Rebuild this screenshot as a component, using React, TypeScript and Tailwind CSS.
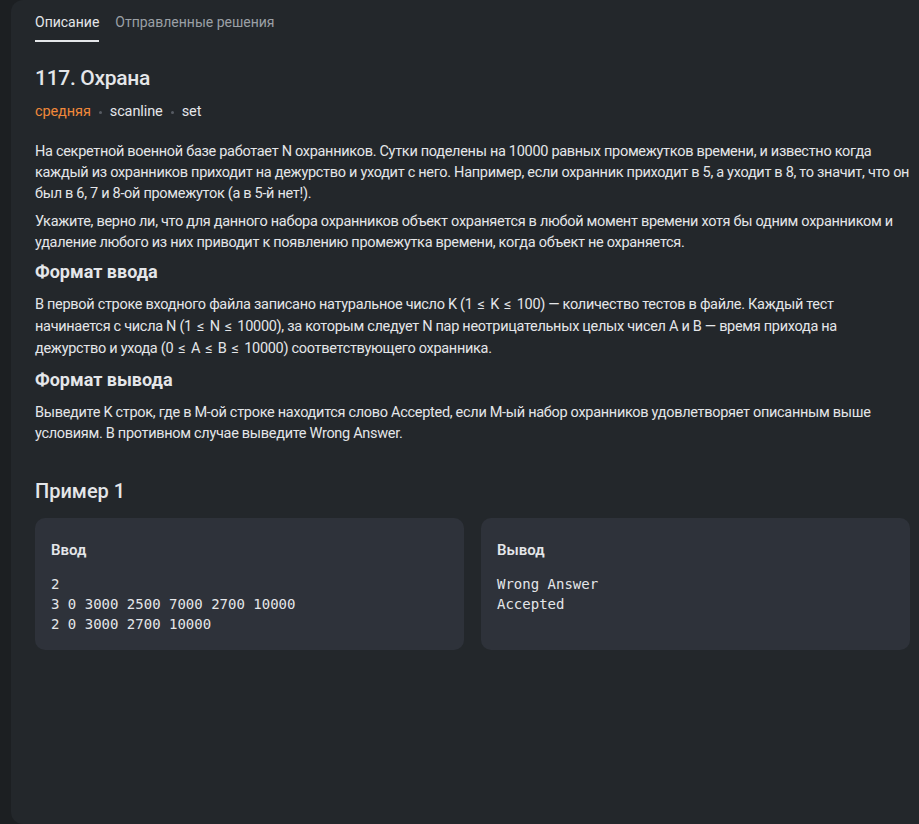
import React from "react";

const font = { fontFamily: 'Roboto, "Noto Sans", sans-serif' };
const mono = { fontFamily: '"DejaVu Sans Mono", monospace' };

export default function App() {
  return (
    <div className="w-[919px] h-[824px] overflow-hidden bg-[#1c1f22] pl-[11px]" style={font}>
      <div className="w-[923px] h-[824px] rounded-xl bg-[#23272b] px-6 text-[#e4e6e9]">
        {/* Tabs */}
        <div className="flex gap-4 h-[42px] text-[14px]">
          <div className="flex flex-col justify-between pt-[11px]">
            <span className="leading-[22px]">Описание</span>
            <div className="h-[2px] bg-[#e4e6e9]" />
          </div>
          <div className="pt-[11px] leading-[22px] text-[#9ba0a6]">Отправленные решения</div>
        </div>

        <h1 className="mt-[22px] text-[21px] font-medium leading-[28px] tracking-[-0.3px]">117. Охрана</h1>

        <div className="mt-[10px] flex items-center gap-2 text-[14.5px] leading-[20px] tracking-[-0.1px]">
          <span className="text-[#f0883a]">средняя</span>
          <span className="w-[3px] h-[3px] rounded-full bg-[#575c63]" />
          <span>scanline</span>
          <span className="w-[3px] h-[3px] rounded-full bg-[#575c63]" />
          <span>set</span>
        </div>

        <div className="mt-[19px] text-[14.5px] leading-[21px] tracking-[-0.3px] whitespace-nowrap">
          <p>
            На секретной военной базе работает N охранников. Сутки поделены на 10000 равных промежутков времени, и известно когда
            <br />
            каждый из охранников приходит на дежурство и уходит с него. Например, если охранник приходит в 5, а уходит в 8, то значит, что он
            <br />
            был в 6, 7 и 8-ой промежуток (а в 5-й нет!).
          </p>
          <p className="mt-[7px]">
            Укажите, верно ли, что для данного набора охранников объект охраняется в любой момент времени хотя бы одним охранником и
            <br />
            удаление любого из них приводит к появлению промежутка времени, когда объект не охраняется.
          </p>

          <h2 className="mt-[7px] text-[18px] font-bold leading-[24px] tracking-normal">Формат ввода</h2>
          <p className="mt-[10px] leading-[22px]">
            В первой строке входного файла записано натуральное число K (1 <span className="px-[2px]">≤</span> K <span className="px-[2px]">≤</span> 100) — количество тестов в файле. Каждый тест
            <br />
            начинается с числа N (1 <span className="px-[2px]">≤</span> N <span className="px-[2px]">≤</span> 10000), за которым следует N пар неотрицательных целых чисел A и B — время прихода на
            <br />
            дежурство и ухода (0 <span className="px-[2px]">≤</span> A <span className="px-[2px]">≤</span> B <span className="px-[2px]">≤</span> 10000) соответствующего охранника.
          </p>

          <h2 className="mt-[8px] text-[18px] font-bold leading-[24px] tracking-normal">Формат вывода</h2>
          <p className="mt-[10px]">
            Выведите K строк, где в M-ой строке находится слово Accepted, если M-ый набор охранников удовлетворяет описанным выше
            <br />
            условиям. В противном случае выведите Wrong Answer.
          </p>
        </div>

        <h2 className="mt-[34px] text-[20px] font-medium leading-[26px]">Пример 1</h2>

        <div className="mt-[14px] grid grid-cols-2 gap-[17px]">
          <div className="h-[132px] rounded-[10px] bg-[#2e323a] px-4 pt-[22px]">
            <div className="text-[15px] font-semibold leading-[20px]">Ввод</div>
            <pre className="mt-[14px] text-[14px] leading-[20px]" style={mono}>
              {"2\n3 0 3000 2500 7000 2700 10000\n2 0 3000 2700 10000"}
            </pre>
          </div>
          <div className="h-[132px] rounded-[10px] bg-[#2e323a] px-4 pt-[22px]">
            <div className="text-[15px] font-semibold leading-[20px]">Вывод</div>
            <pre className="mt-[14px] text-[14px] leading-[20px]" style={mono}>
              {"Wrong Answer\nAccepted"}
            </pre>
          </div>
        </div>
      </div>
    </div>
  );
}
